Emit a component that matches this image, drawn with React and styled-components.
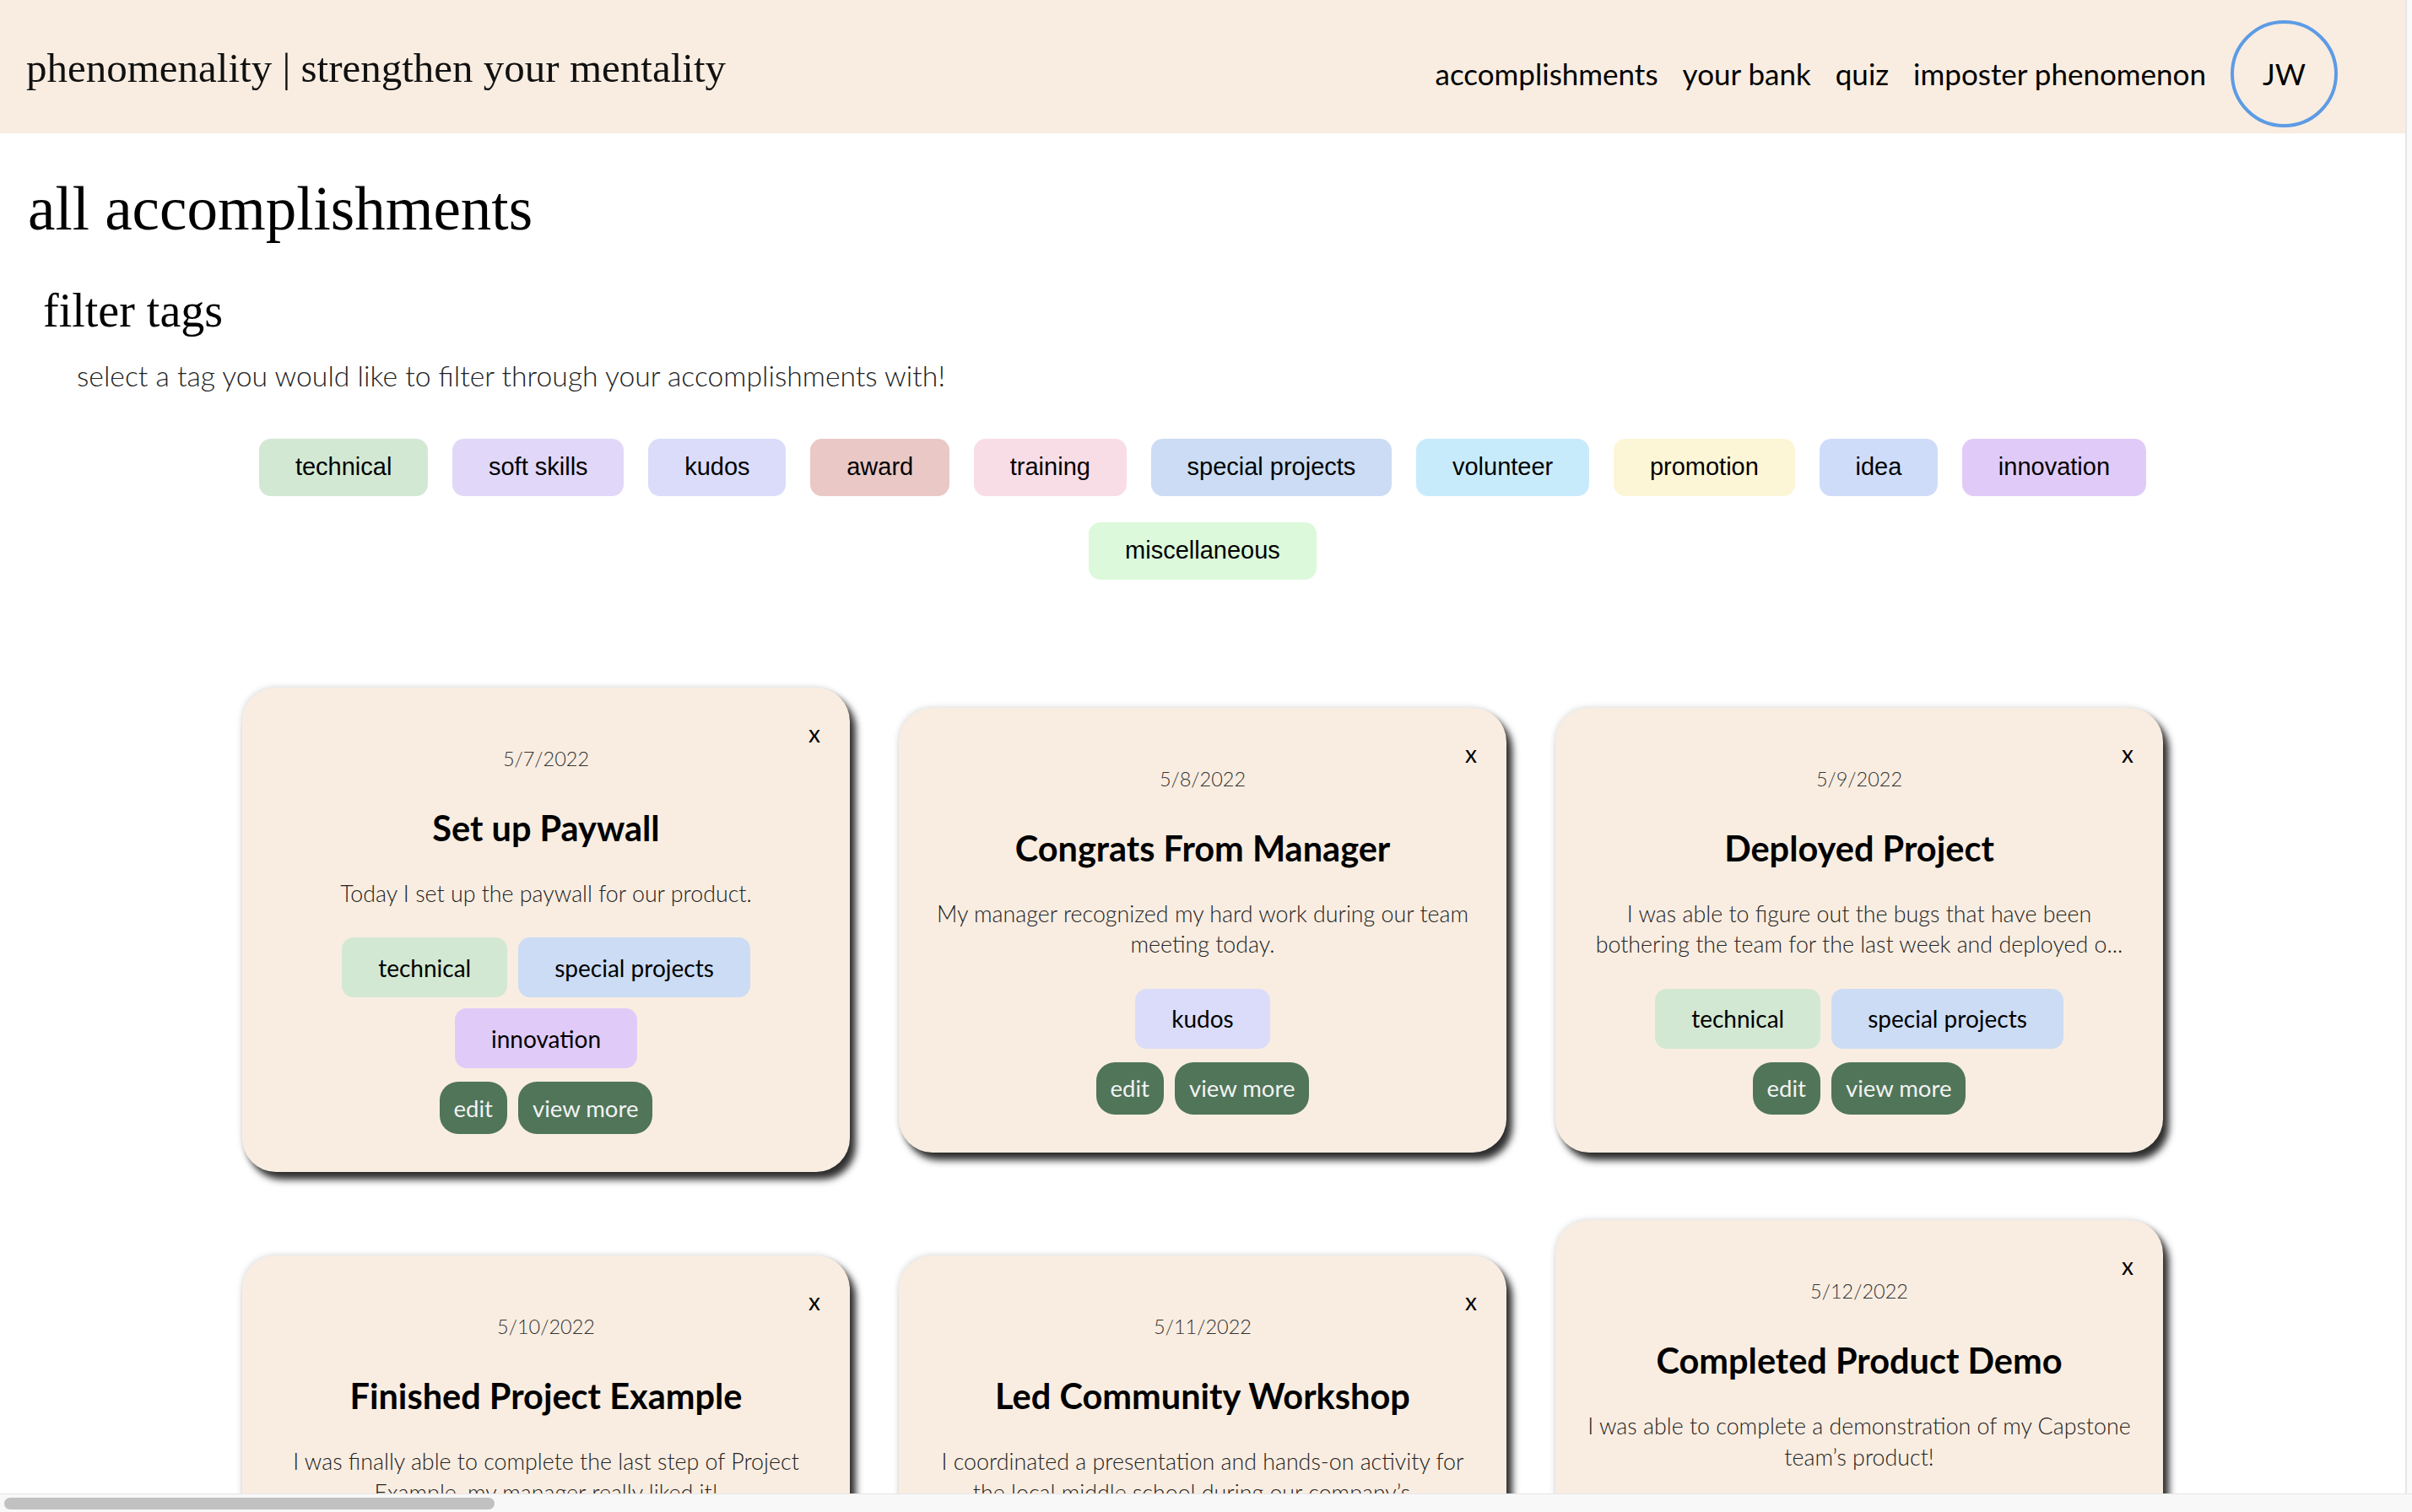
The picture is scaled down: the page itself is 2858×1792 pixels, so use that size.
import React from "react";
import styled, { createGlobalStyle } from "styled-components";

const GlobalStyle = createGlobalStyle`
  html, body { margin: 0; padding: 0; background: #ffffff; overflow: hidden; }
  body { font-family: "Lato", "Liberation Sans", sans-serif; color: #000; }
  * { box-sizing: border-box; }
`;

const TAG_COLORS = {
  technical: "#d3e8d3",
  "soft skills": "#e1d7f8",
  kudos: "#dadcfa",
  award: "#eac8c6",
  training: "#f8dde7",
  "special projects": "#cbdcf4",
  volunteer: "#c8ebfc",
  promotion: "#fcf6d7",
  idea: "#cfdcf9",
  innovation: "#e0cbf8",
  miscellaneous: "#dcf9db",
};

const FILTERS = Object.keys(TAG_COLORS);

const CARDS = [
  { date: "5/7/2022", title: "Set up Paywall", text: "Today I set up the paywall for our product.", tags: ["technical", "special projects", "innovation"] },
  { date: "5/8/2022", title: "Congrats From Manager", text: "My manager recognized my hard work during our team meeting today.", tags: ["kudos"] },
  { date: "5/9/2022", title: "Deployed Project", text: "I was able to figure out the bugs that have been bothering the team for the last week and deployed our fix to production.", tags: ["technical", "special projects"] },
  { date: "5/10/2022", title: "Finished Project Example", text: "I was finally able to complete the last step of Project Example, my manager really liked it!", tags: ["special projects"] },
  { date: "5/11/2022", title: "Led Community Workshop", text: "I coordinated a presentation and hands-on activity for the local middle school during our company’s volunteer day.", tags: ["volunteer"] },
  { date: "5/12/2022", title: "Completed Product Demo", text: "I was able to complete a demonstration of my Capstone team’s product!", tags: ["technical", "special projects", "innovation"] },
];

const preview = (text) => (text.length > 100 ? `${text.slice(0, 100)}...` : text);

const Screen = styled.div`
  width: 2858px;
  height: 1792px;
  display: flex;
  flex-direction: column;
  overflow: hidden;
`;

const Viewport = styled.div`
  flex: 1;
  min-height: 0;
  display: flex;
`;

const Page = styled.main`
  width: 2850px;
  flex: none;
  overflow: hidden;
`;

const VTrack = styled.div`
  flex: 1;
  background: #fafafa;
  border-left: 2px solid #e6e6e6;
`;

const HTrack = styled.div`
  height: 22px;
  flex: none;
  background: #f8f8f8;
  border-top: 1px solid #e6e6e6;
  display: flex;
  align-items: center;
  padding-left: 5px;
`;

const HThumb = styled.div`
  width: 581px;
  height: 14px;
  border-radius: 7px;
  background: #c1c1c1;
`;

const Header = styled.header`
  height: 158px;
  background: #f9ede1;
  display: flex;
  align-items: center;
  justify-content: space-between;
  padding: 0 80px 0 31px;
`;

const Brand = styled.div`
  font-family: "Liberation Serif", serif;
  font-size: 49px;
  color: #111;
  padding-top: 2px;
`;

const Nav = styled.nav`
  display: flex;
  align-items: center;
  gap: 29px;
  padding-top: 16px;
`;

const NavLink = styled.a`
  font-family: "Lato", sans-serif;
  font-size: 35px;
  color: #000;
  text-decoration: none;
`;

const Avatar = styled.div`
  width: 127px;
  height: 127px;
  border: 4px solid #5d9be5;
  border-radius: 50%;
  display: flex;
  align-items: center;
  justify-content: center;
  font-size: 35px;
  color: #000;
`;

const PageTitle = styled.h1`
  margin: 46px 0 0 33px;
  font-family: "Liberation Serif", serif;
  font-weight: 400;
  font-size: 73px;
  line-height: 1.2;
`;

const SectionTitle = styled.h2`
  margin: 43px 0 0 51px;
  font-family: "Liberation Serif", serif;
  font-weight: 400;
  font-size: 56px;
  line-height: 1.2;
`;

const Hint = styled.p`
  margin: 23px 0 0 91px;
  font-size: 33.7px;
  font-weight: 300;
  line-height: 40px;
  color: #222;
`;

const FilterRow = styled.div`
  width: 2300px;
  margin: 55px auto 0;
  display: flex;
  flex-wrap: wrap;
  justify-content: center;
  gap: 31px 29px;
`;

const FilterTag = styled.button`
  height: 68px;
  padding: 0 42.8px;
  border: none;
  border-radius: 14px;
  background: ${(p) => p.$bg};
  font-family: "Liberation Sans", Arial, sans-serif;
  font-size: 29px;
  color: #000;
`;

const CardGrid = styled.section`
  width: 2276px;
  margin: 128px auto 0;
  display: grid;
  grid-template-columns: repeat(3, 720px);
  gap: 57px 58px;
  align-items: center;
`;

const Card = styled.article`
  position: relative;
  background: #f9ede1;
  border-radius: 40px;
  box-shadow: 7px 9px 9px rgba(0, 0, 0, 0.82), -1px -1px 7px rgba(0, 0, 0, 0.14);
  padding: 66px 32px 45px;
  display: flex;
  flex-direction: column;
  align-items: center;
  text-align: center;
`;

const Close = styled.button`
  position: absolute;
  top: 37px;
  right: 35px;
  border: none;
  background: none;
  padding: 0;
  font-family: "Lato", sans-serif;
  font-size: 28px;
  line-height: 35px;
  color: #000;
`;

const DateLine = styled.div`
  font-size: 23.5px;
  font-weight: 300;
  line-height: 36px;
  color: #333;
`;

const CardTitle = styled.h3`
  margin: 39px 0 0;
  font-size: 41.5px;
  font-weight: 700;
  line-height: 50px;
`;

const CardText = styled.p`
  margin: 35px 0 0;
  font-size: 26.8px;
  font-weight: 300;
  line-height: 36.5px;
  color: #222;
`;

const CardTags = styled.div`
  margin-top: 34px;
  display: flex;
  flex-wrap: wrap;
  justify-content: center;
  gap: 13px;
`;

const CardTag = styled.span`
  height: 71px;
  padding: 0 43px;
  border-radius: 14px;
  background: ${(p) => p.$bg};
  display: flex;
  align-items: center;
  font-size: 28px;
  color: #000;
`;

const Actions = styled.div`
  margin-top: 16px;
  display: flex;
  gap: 13px;
`;

const ActionButton = styled.button`
  height: 62px;
  padding: 0 17px;
  border: none;
  border-radius: 22px;
  background: #507559;
  color: #f2f2f2;
  font-family: "Lato", sans-serif;
  font-size: 27.5px;
`;

function AccomplishmentCard({ card }) {
  return (
    <Card>
      <Close>x</Close>
      <DateLine>{card.date}</DateLine>
      <CardTitle>{card.title}</CardTitle>
      <CardText>{preview(card.text)}</CardText>
      <CardTags>
        {card.tags.map((t) => (
          <CardTag key={t} $bg={TAG_COLORS[t]}>{t}</CardTag>
        ))}
      </CardTags>
      <Actions>
        <ActionButton>edit</ActionButton>
        <ActionButton>view more</ActionButton>
      </Actions>
    </Card>
  );
}

export default function App() {
  return (
    <>
      <GlobalStyle />
      <Screen>
        <Viewport>
          <Page>
            <Header>
              <Brand>phenomenality | strengthen your mentality</Brand>
              <Nav>
                <NavLink>accomplishments</NavLink>
                <NavLink>your bank</NavLink>
                <NavLink>quiz</NavLink>
                <NavLink>imposter phenomenon</NavLink>
                <Avatar>JW</Avatar>
              </Nav>
            </Header>
            <PageTitle>all accomplishments</PageTitle>
            <SectionTitle>filter tags</SectionTitle>
            <Hint>select a tag you would like to filter through your accomplishments with!</Hint>
            <FilterRow>
              {FILTERS.map((f) => (
                <FilterTag key={f} $bg={TAG_COLORS[f]}>{f}</FilterTag>
              ))}
            </FilterRow>
            <CardGrid>
              {CARDS.map((c) => (
                <AccomplishmentCard key={c.date} card={c} />
              ))}
            </CardGrid>
          </Page>
          <VTrack />
        </Viewport>
        <HTrack>
          <HThumb />
        </HTrack>
      </Screen>
    </>
  );
}
